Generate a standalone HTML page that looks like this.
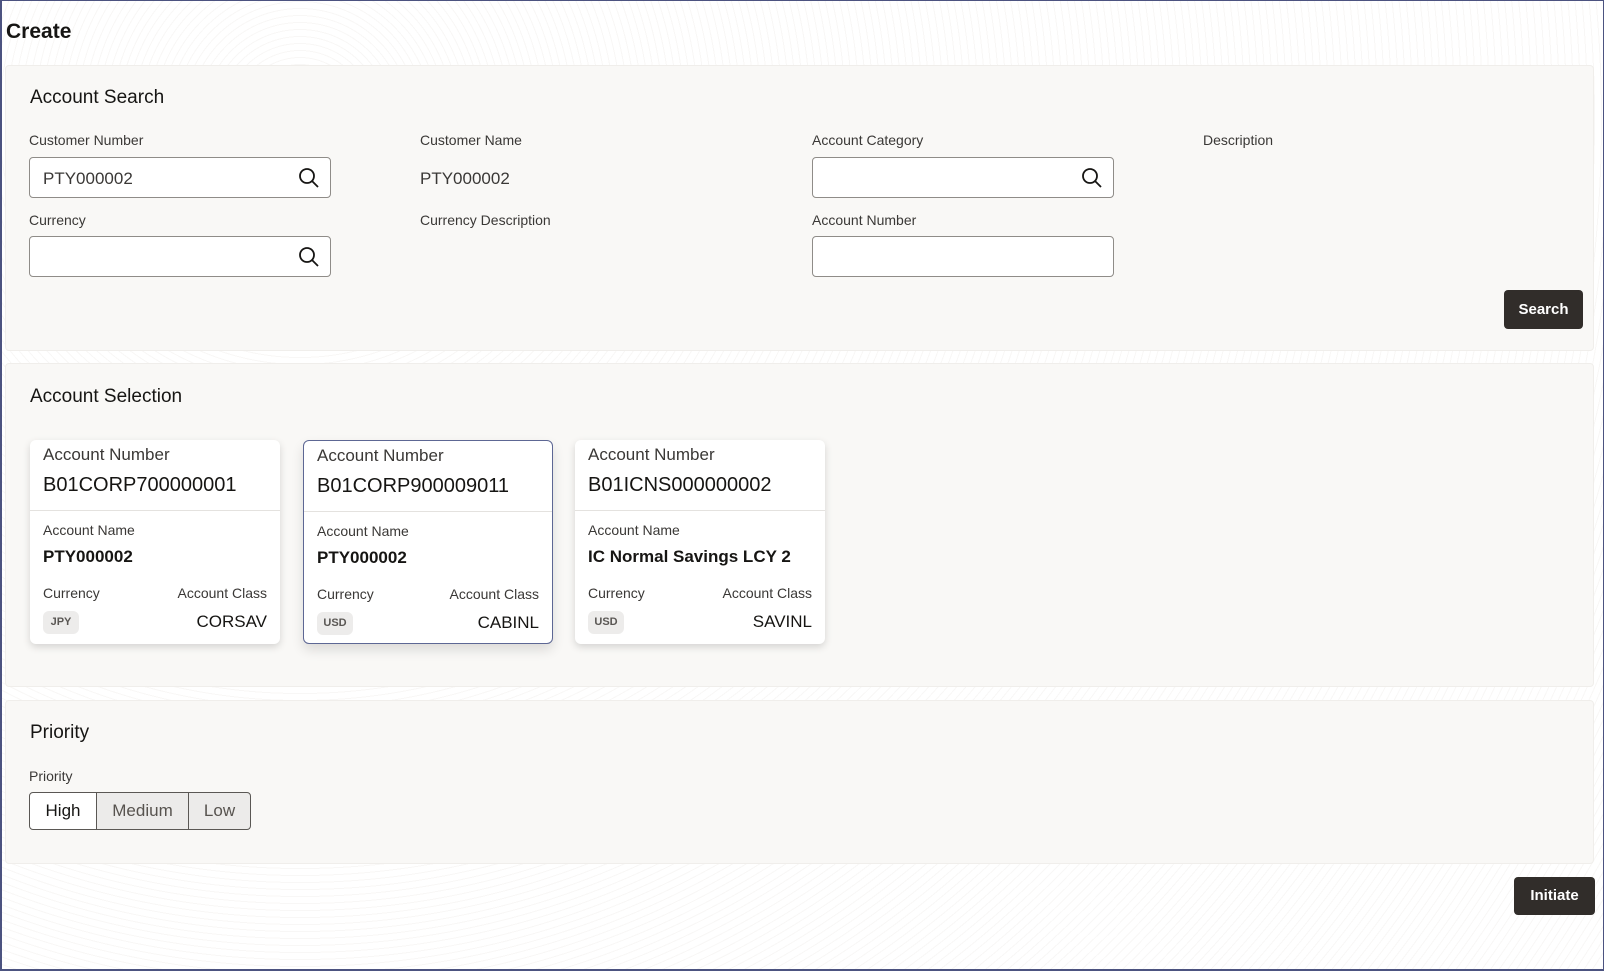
<!DOCTYPE html>
<html><head><meta charset="utf-8"><style>
*{box-sizing:border-box;margin:0;padding:0}
body{width:1604px;height:971px;overflow:hidden;background:#fff;font-family:"Liberation Sans",sans-serif;color:#161513;position:relative}
.frame{position:absolute;left:0;top:0;width:1604px;height:971px;border:1px solid #4c5380;border-left-width:2px;border-bottom-width:2px;pointer-events:none;z-index:9}
.bg{position:absolute;inset:0;background:repeating-radial-gradient(circle at 300px 120px,#fff 0 6px,#f6f5f3 6px 7px),#fff;opacity:.7}
.abs{position:absolute}
.panel{position:absolute;left:5px;width:1589px;background:#f9f8f6;border:1px solid #f0eeeb;border-radius:4px}
h1{position:absolute;left:6px;top:20px;font-size:21px;font-weight:bold}
.title{position:absolute;font-size:19px;color:#161513}
.lbl{position:absolute;font-size:14px;color:#3a3836}
.inp{position:absolute;background:#fff;border:1px solid #8f8c88;border-radius:4px;height:41px;width:302px}
.inp span{position:absolute;left:13px;top:11px;font-size:17px;color:#3a3836}
.inp svg{position:absolute;right:10px;top:9px}
.btn{position:absolute;background:#312d2a;color:#fff;font-weight:bold;font-size:15px;border-radius:4px;text-align:center}
.card{position:absolute;top:440px;width:250px;height:204px;background:#fff;border-radius:6px;box-shadow:0 3px 8px rgba(0,0,0,.15)}
.card.sel{border:1.5px solid #5d6794;box-shadow:0 6px 12px rgba(0,0,0,.12)}
.card .a{position:absolute;left:13px;top:5px;font-size:17px;color:#3a3836}
.card .n{position:absolute;left:13px;top:34px;font-size:20px}
.card .d{position:absolute;left:0;right:0;top:70px;border-top:1px solid #e4e2df}
.card .l{position:absolute;font-size:14px;color:#3a3836}
.card .v{position:absolute;font-size:17px;font-weight:bold;color:#161513}
.badge{position:absolute;left:13px;top:171px;width:36px;height:23px;background:#edeceb;border-radius:6px;font-size:11px;font-weight:bold;color:#5a5754;text-align:center;line-height:23px}
.seg{position:absolute;top:792px;height:38px;font-size:17px;text-align:center;line-height:36px;border:1px solid #5a5754;color:#57534f;background:#ecebea}
</style></head><body>
<div class="bg"></div>
<h1>Create</h1>

<div class="panel" style="top:65px;height:286px"></div>
<div class="title" style="left:30px;top:87px">Account Search</div>
<div class="lbl" style="left:29px;top:132px">Customer Number</div>
<div class="inp" style="left:29px;top:157px"><span>PTY000002</span><svg width="22" height="22" viewBox="0 0 22 22"><circle cx="9" cy="9" r="7" fill="none" stroke="#161513" stroke-width="1.8"/><path d="M14 14l6 6" stroke="#161513" stroke-width="1.8"/></svg></div>
<div class="lbl" style="left:420px;top:132px">Customer Name</div>
<div class="abs" style="left:420px;top:169px;font-size:17px;color:#3a3836">PTY000002</div>
<div class="lbl" style="left:812px;top:132px">Account Category</div>
<div class="inp" style="left:812px;top:157px"><svg width="22" height="22" viewBox="0 0 22 22"><circle cx="9" cy="9" r="7" fill="none" stroke="#161513" stroke-width="1.8"/><path d="M14 14l6 6" stroke="#161513" stroke-width="1.8"/></svg></div>
<div class="lbl" style="left:1203px;top:132px">Description</div>
<div class="lbl" style="left:29px;top:212px">Currency</div>
<div class="inp" style="left:29px;top:236px"><svg width="22" height="22" viewBox="0 0 22 22"><circle cx="9" cy="9" r="7" fill="none" stroke="#161513" stroke-width="1.8"/><path d="M14 14l6 6" stroke="#161513" stroke-width="1.8"/></svg></div>
<div class="lbl" style="left:420px;top:212px">Currency Description</div>
<div class="lbl" style="left:812px;top:212px">Account Number</div>
<div class="inp" style="left:812px;top:236px"></div>
<div class="btn" style="left:1504px;top:290px;width:79px;height:39px;line-height:39px">Search</div>

<div class="panel" style="top:363px;height:324px"></div>
<div class="title" style="left:30px;top:386px">Account Selection</div>
<div class="card" style="left:30px"><div class="a">Account Number</div><div class="n">B01CORP700000001</div><div class="d"></div>
<div class="l" style="left:13px;top:82px">Account Name</div><div class="v" style="left:13px;top:107px">PTY000002</div>
<div class="l" style="left:13px;top:145px">Currency</div><div class="l" style="right:13px;top:145px">Account Class</div>
<div class="badge">JPY</div><div class="v" style="right:13px;top:172px;font-weight:normal">CORSAV</div></div>
<div class="card sel" style="left:303px"><div class="a">Account Number</div><div class="n">B01CORP900009011</div><div class="d"></div>
<div class="l" style="left:13px;top:82px">Account Name</div><div class="v" style="left:13px;top:107px">PTY000002</div>
<div class="l" style="left:13px;top:145px">Currency</div><div class="l" style="right:13px;top:145px">Account Class</div>
<div class="badge">USD</div><div class="v" style="right:13px;top:172px;font-weight:normal">CABINL</div></div>
<div class="card" style="left:575px"><div class="a">Account Number</div><div class="n">B01ICNS000000002</div><div class="d"></div>
<div class="l" style="left:13px;top:82px">Account Name</div><div class="v" style="left:13px;top:107px">IC Normal Savings LCY 2</div>
<div class="l" style="left:13px;top:145px">Currency</div><div class="l" style="right:13px;top:145px">Account Class</div>
<div class="badge">USD</div><div class="v" style="right:13px;top:172px;font-weight:normal">SAVINL</div></div>

<div class="panel" style="top:700px;height:164px"></div>
<div class="title" style="left:30px;top:722px">Priority</div>
<div class="lbl" style="left:29px;top:768px">Priority</div>
<div class="seg" style="left:29px;width:68px;background:#fff;color:#161513;border-radius:4px 0 0 4px">High</div>
<div class="seg" style="left:96px;width:93px">Medium</div>
<div class="seg" style="left:188px;width:63px;border-radius:0 4px 4px 0">Low</div>

<div class="btn" style="left:1514px;top:877px;width:81px;height:38px;line-height:38px">Initiate</div>
<div class="frame"></div>
</body></html>
